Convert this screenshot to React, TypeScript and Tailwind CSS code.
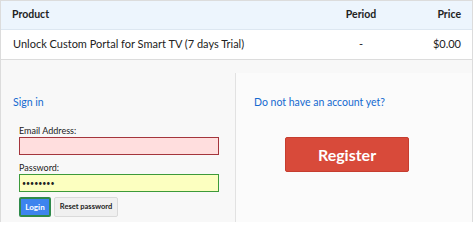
import { useState } from 'react'

const App = () => {
  const [email, setEmail] = useState('')
  const [password, setPassword] = useState('password')

  return (
    <div className="w-[474px] h-[222px] overflow-hidden bg-white text-[#222] font-['Lato','Liberation_Sans',sans-serif]">
      <div className="w-[473px] h-[222px] border-x border-t border-[#dcdcdc] flex flex-col">
        {/* cart table */}
        <div className="flex items-center h-[29px] bg-[#edf5fd] border-b border-[#dde7f1] text-[10.5px] font-bold shrink-0">
          <div className="w-[309px] pl-[11px]">Product</div>
          <div className="w-[102px] text-center">Period</div>
          <div className="flex-1 text-right pr-[11px]">Price</div>
        </div>
        <div className="flex items-center h-[30px] border-b border-[#dcdcdc] text-[11px] shrink-0">
          <div className="w-[309px] pl-[12px]">Unlock Custom Portal for Smart TV (7 days Trial)</div>
          <div className="w-[102px] text-center">-</div>
          <div className="flex-1 text-right pr-[11px]">$0.00</div>
        </div>

        {/* sign in / register */}
        <div className="flex flex-1 bg-[#f8f8f8]">
          <div className="w-[235px] mt-[13px] border-r border-[#e2e2e2] pl-[12px] pt-[20px]">
            <a href="#" className="block text-[10.5px] leading-[18px] text-[#1469d0]">
              Sign in
            </a>
            <form className="ml-[6px] mt-[13px] w-[200px]" onSubmit={(e) => e.preventDefault()}>
              <label htmlFor="email" className="block text-[9px] leading-[13px]">
                Email Address:
              </label>
              <input
                id="email"
                type="email"
                value={email}
                onChange={(e) => setEmail(e.target.value)}
                className="block w-[200px] h-[18px] bg-[#ffdede] border border-[#a4353c] outline-none px-[2px] text-[9px]"
              />
              <label htmlFor="password" className="block text-[9px] leading-[13px] mt-[6px]">
                Password:
              </label>
              <input
                id="password"
                type="password"
                value={password}
                onChange={(e) => setPassword(e.target.value)}
                className="block w-[200px] h-[18px] bg-[#fcffc0] border border-[#3d9a3a] outline-none px-[2px] text-[7px]"
              />
              <div className="flex gap-[3px] mt-[5px]">
                <button
                  type="submit"
                  className="h-[20px] w-[32px] bg-[#3d84ee] border-2 border-[#2f8a4b] rounded-[2px] text-white text-[8px] font-bold"
                >
                  Login
                </button>
                <button
                  type="button"
                  className="h-[20px] w-[64px] bg-[#f0f0f0] border border-[#dadada] rounded-[2px] text-[#222] text-[7.5px] font-bold"
                >
                  Reset password
                </button>
              </div>
            </form>
          </div>
          <div className="flex-1 mt-[13px] pl-[18px] pt-[20px] bg-[#fbfbfb]">
            <a href="#" className="block text-[10.5px] leading-[18px] text-[#1469d0]">
              Do not have an account yet?
            </a>
            <button
              type="button"
              className="ml-[31px] mt-[26px] w-[124px] h-[35px] bg-[#d84a3a] border border-[#c63d2f] rounded-[2px] text-white text-[16px] font-bold"
            >
              Register
            </button>
          </div>
        </div>
      </div>
    </div>
  )
}

export default App
